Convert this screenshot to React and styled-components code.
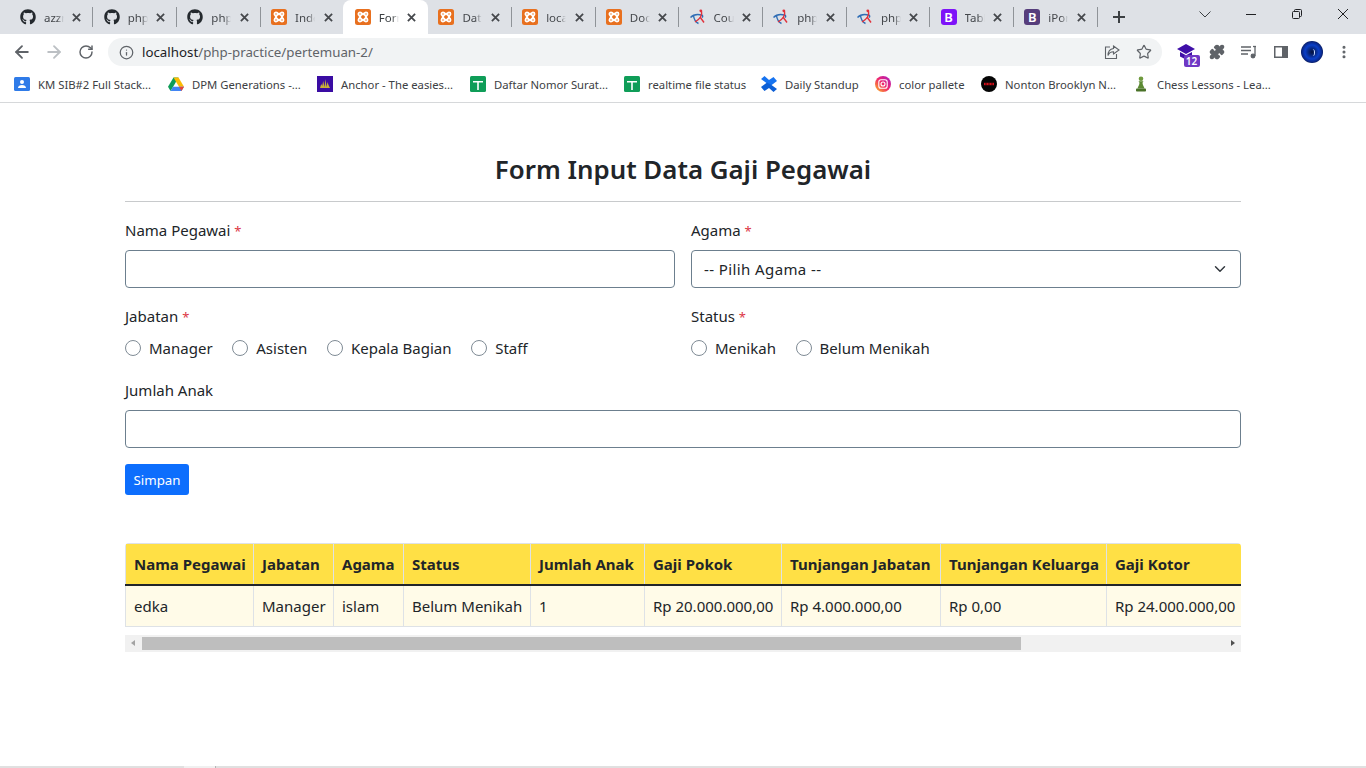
import React from 'react'
import styled, { createGlobalStyle } from 'styled-components'
import { FaGithub } from 'react-icons/fa'
import { ArrowLeft, ArrowRight, RotateCw, Info, Star, Puzzle, EllipsisVertical } from 'lucide-react'

const FONT = `'Noto Sans', 'Open Sans', sans-serif`

const GlobalStyle = createGlobalStyle`
  html, body {
    margin: 0;
    padding: 0;
    background: #fff;
    overflow: hidden;
  }
  * {
    box-sizing: border-box;
  }
`

const XamppIcon = () => (
  <svg width='16' height='16' viewBox='0 0 16 16' fill='none'>
    <rect width='16' height='16' rx='2.5' fill='#e8701f' />
    <g stroke='#fff' strokeWidth='1.7'>
      <circle cx='5' cy='5' r='1.6' />
      <circle cx='11' cy='5' r='1.6' />
      <circle cx='5' cy='11' r='1.6' />
      <circle cx='11' cy='11' r='1.6' />
      <path d='M6.600 5h2.800M6.600 11h2.800M5 6.600v2.800M11 6.600v2.800' strokeWidth='2.400' />
    </g>
  </svg>
)

const CurveIcon = () => (
  <svg width='16' height='16' viewBox='0 0 16 16' fill='none'>
    <path d='M.500 8.500C3 5.800 7 5 11.500 6c1.500.4 1.500 1.500.5 2.500' stroke='#2f6db5' strokeWidth='1.400' />
    <path d='M3.500 6.500c.4 3.500 2 6.500 5 8' stroke='#2f6db5' strokeWidth='1.400' />
    <path d='M11.500 2c.8 3.500-1.500 8-6.500 11' stroke='#e0303a' strokeWidth='1.400' />
    <path d='M10 8l4 5.500' stroke='#e0303a' strokeWidth='1.400' />
    <circle cx='10.800' cy='1.800' r='1.400' fill='#e0303a' />
  </svg>
)

const tabs = [
  { title: 'azzr', kind: 'github' },
  { title: 'php', kind: 'github' },
  { title: 'php', kind: 'github' },
  { title: 'Inde', kind: 'xampp' },
  { title: 'Forr', kind: 'xampp', active: true },
  { title: 'Data', kind: 'xampp' },
  { title: 'loca', kind: 'xampp' },
  { title: 'Doc', kind: 'xampp' },
  { title: 'Cou', kind: 'curve' },
  { title: 'php', kind: 'curve' },
  { title: 'php', kind: 'curve' },
  { title: 'Tabl', kind: 'bootstrap', color: '#7e13f8' },
  { title: 'iPor', kind: 'bootstrap', color: '#563d7c' },
]

const TabIcon = ({ kind, color }) => {
  if (kind === 'github') return <FaGithub size={16} color='#24292e' />
  if (kind === 'xampp') return <XamppIcon />
  if (kind === 'curve') return <CurveIcon />
  return <BootstrapMark $color={color}>B</BootstrapMark>
}

const bookmarks = [
  { title: 'KM SIB#2 Full Stack...', width: 154, icon: 'contact' },
  { title: 'DPM Generations -...', width: 149, icon: 'drive' },
  { title: 'Anchor - The easies...', width: 153, icon: 'anchor' },
  { title: 'Daftar Nomor Surat...', width: 154, icon: 'sheet' },
  { title: 'realtime file status', width: 137, icon: 'sheet' },
  { title: 'Daily Standup', width: 114, icon: 'confluence' },
  { title: 'color pallete', width: 106, icon: 'instagram' },
  { title: 'Nonton Brooklyn N...', width: 152, icon: 'movie' },
  { title: 'Chess Lessons - Lea...', width: 150, icon: 'chess' },
]

const BookmarkIcon = ({ icon }) => {
  switch (icon) {
    case 'contact':
      return (
        <svg width='16' height='16' viewBox='0 0 16 16'>
          <rect y='1' width='16' height='14' rx='1.500' fill='#2f7be8' />
          <circle cx='8' cy='6' r='2' fill='#fff' />
          <path d='M4 12c0-2 1.800-3 4-3s4 1 4 3z' fill='#fff' />
        </svg>
      )
    case 'drive':
      return (
        <svg width='16' height='16' viewBox='0 0 16 16'>
          <path d='M5.500 1.500h5L5 11 2.500 15 0 10.800z' fill='#0f9d58' />
          <path d='M10.500 1.500 16 10.800h-5L5.500 1.500z' fill='#fbbc04' />
          <path d='M16 10.800 13.500 15h-11L5 10.800z' fill='#4285f4' />
          <path d='M16 10.800 13.500 15 11 10.800z' fill='#ea4335' />
        </svg>
      )
    case 'anchor':
      return (
        <svg width='16' height='16' viewBox='0 0 16 16'>
          <rect width='16' height='16' fill='#3a0ca3' />
          <path d='M3 12l1.200-4 1 2 1-5 1.300 6 1-8 1 8 1-5 1 3L13 12z' fill='#c9b037' />
        </svg>
      )
    case 'sheet':
      return (
        <svg width='16' height='16' viewBox='0 0 16 16'>
          <rect width='16' height='16' rx='1.500' fill='#0f9d58' />
          <path d='M3 5h10v1.500H8.800V14H7.200V6.500H3z' fill='#fff' />
        </svg>
      )
    case 'confluence':
      return (
        <svg width='16' height='16' viewBox='0 0 16 16'>
          <path d='M0 3 3.500 0 8 4l4.500-3L16 5l-6 4.500L5.500 7z' fill='#1673f0' />
          <path d='M0 11l6-4.500L10.500 9 16 13l-3.500 3L8 12l-4.500 3z' fill='#0c5fd6' />
        </svg>
      )
    case 'instagram':
      return (
        <svg width='16' height='16' viewBox='0 0 16 16' fill='none'>
          <defs>
            <linearGradient id='ig' x1='0' y1='1' x2='1' y2='0'>
              <stop offset='0' stopColor='#fdc21a' />
              <stop offset='0.5' stopColor='#f0276c' />
              <stop offset='1' stopColor='#a51cc9' />
            </linearGradient>
          </defs>
          <circle cx='8' cy='8' r='8' fill='url(#ig)' />
          <rect x='3.800' y='3.800' width='8.400' height='8.400' rx='2.300' stroke='#fff' strokeWidth='1.100' />
          <circle cx='8' cy='8' r='2' stroke='#fff' strokeWidth='1.100' />
        </svg>
      )
    case 'movie':
      return (
        <svg width='16' height='16' viewBox='0 0 16 16'>
          <circle cx='8' cy='8' r='8' fill='#050505' />
          <path d='M3 6.800h10v2.400H3z' fill='#d8101a' />
          <path d='M5 6.800v2.400M8 6.800v2.400M11 6.800v2.400' stroke='#050505' strokeWidth='.7' />
        </svg>
      )
    default:
      return (
        <svg width='16' height='16' viewBox='0 0 16 16'>
          <circle cx='8' cy='2.800' r='2.300' fill='#6f9a3e' />
          <path d='M5.500 5.300h5L9.500 6.800c0 2 1.500 4 2 5.700h-7C5 10.800 6.500 8.800 6.500 6.800z' fill='#5c8a33' />
          <rect x='3' y='12.500' width='10' height='3' rx='.8' fill='#4a7228' />
        </svg>
      )
  }
}

const columns = [
  { title: 'Nama Pegawai', value: 'edka', width: 128 },
  { title: 'Jabatan', value: 'Manager', width: 80 },
  { title: 'Agama', value: 'islam', width: 70 },
  { title: 'Status', value: 'Belum Menikah', width: 127 },
  { title: 'Jumlah Anak', value: '1', width: 114 },
  { title: 'Gaji Pokok', value: 'Rp 20.000.000,00', width: 137 },
  { title: 'Tunjangan Jabatan', value: 'Rp 4.000.000,00', width: 159 },
  { title: 'Tunjangan Keluarga', value: 'Rp 0,00', width: 166 },
  { title: 'Gaji Kotor', value: 'Rp 24.000.000,00', width: 139 },
]

const App = () => {
  return (
    <Screen>
      <GlobalStyle />
      <TabStrip>
        {tabs.map((tab, i) => (
          <Tab key={i} $active={tab.active} $divider={i !== 3 && i !== 4}>
            <TabIcon kind={tab.kind} color={tab.color} />
            <TabTitle $active={tab.active}>{tab.title}</TabTitle>
            <TabClose viewBox='0 0 10 10'>
              <path d='M1 1l8 8M9 1L1 9' />
            </TabClose>
          </Tab>
        ))}
        <NewTab viewBox='0 0 12 12'>
          <path d='M6 0v12M0 6h12' />
        </NewTab>
        <WindowControls>
          <WindowButton $width={46}>
            <svg width='12' height='7' viewBox='0 0 12 7' fill='none' stroke='#3c4043'>
              <path d='M.5.500 6 6l5.500-5.500' />
            </svg>
          </WindowButton>
          <WindowButton $width={46}>
            <svg width='10' height='1' viewBox='0 0 10 1'>
              <rect width='10' height='1' fill='#202124' />
            </svg>
          </WindowButton>
          <WindowButton $width={46}>
            <svg width='10' height='10' viewBox='0 0 10 10' fill='none' stroke='#202124'>
              <rect x='.5' y='2.500' width='7' height='7' rx='1' />
              <path d='M2.500 2.500v-1a1 1 0 0 1 1-1h5a1 1 0 0 1 1 1v5a1 1 0 0 1-1 1h-1' />
            </svg>
          </WindowButton>
          <WindowButton $width={46}>
            <svg width='10' height='10' viewBox='0 0 10 10' fill='none' stroke='#202124'>
              <path d='M0 0l10 10M10 0L0 10' />
            </svg>
          </WindowButton>
        </WindowControls>
      </TabStrip>

      <Toolbar>
        <NavButton>
          <ArrowLeft size={20} color='#5f6368' strokeWidth={2.2} />
        </NavButton>
        <NavButton>
          <ArrowRight size={20} color='#bcc0c4' strokeWidth={2.2} />
        </NavButton>
        <NavButton>
          <RotateCw size={16} color='#5f6368' strokeWidth={2.2} />
        </NavButton>
        <Omnibox>
          <Info size={15} color='#5f6368' strokeWidth={2} />
          <UrlText>
            <strong>localhost</strong>/php-practice/pertemuan-2/
          </UrlText>
          <OmniActions>
            <svg width='16' height='16' viewBox='0 0 16 16' fill='none' stroke='#5f6368' strokeWidth='1.100'>
              <path d='M6 3H1.500v11.500h11V10' />
              <path d='M9.500 2l5.500 4-5.500 4V7.800C7 7.800 5 9 4 11.500 4 8 6 5 9.500 4.500z' />
            </svg>
            <Star size={16} color='#5f6368' strokeWidth={1.8} />
          </OmniActions>
        </Omnibox>
        <Extensions>
          <ExtensionSlot>
            <svg width='18' height='16' viewBox='0 0 18 16'>
              <path d='M9 0l9 5-9 5-9-5z' fill='#3f0fa8' />
              <path d='M3 8v4.500l6 3 6-3V8l-6 3.300z' fill='#3f0fa8' />
            </svg>
            <ExtensionBadge>12</ExtensionBadge>
          </ExtensionSlot>
          <ExtensionSlot>
            <Puzzle size={16} color='#5f6368' fill='#5f6368' />
          </ExtensionSlot>
          <ExtensionSlot>
            <svg width='16' height='14' viewBox='0 0 16 14' fill='none' stroke='#5f6368' strokeWidth='1.300'>
              <path d='M0 2h10M0 5.500h10M0 9h7' />
              <path d='M14 1.500V11' />
              <path d='M12 1.500h3' />
              <circle cx='12' cy='11' r='1.800' fill='#5f6368' />
            </svg>
          </ExtensionSlot>
          <ExtensionSlot>
            <svg width='14' height='12' viewBox='0 0 14 12'>
              <path d='M0 0h14v12H0zm1.500 1.500v9h6.500v-9z' fill='#5f6368' fillRule='evenodd' />
            </svg>
          </ExtensionSlot>
          <ExtensionSlot>
            <Avatar>
              <AvatarCore />
            </Avatar>
          </ExtensionSlot>
          <ExtensionSlot>
            <EllipsisVertical size={16} color='#5f6368' strokeWidth={2.6} />
          </ExtensionSlot>
        </Extensions>
      </Toolbar>

      <BookmarkBar>
        {bookmarks.map((b) => (
          <Bookmark key={b.title} $width={b.width}>
            <BookmarkIcon icon={b.icon} />
            <span>{b.title}</span>
          </Bookmark>
        ))}
      </BookmarkBar>

      <Main>
        <Title>Form Input Data Gaji Pegawai</Title>
        <Rule />
        <FormGrid>
          <Field>
            <Label>
              Nama Pegawai <Required>*</Required>
            </Label>
            <TextInput type='text' />
          </Field>
          <Field>
            <Label>
              Agama <Required>*</Required>
            </Label>
            <SelectInput defaultValue=''>
              <option value=''>-- Pilih Agama --</option>
            </SelectInput>
          </Field>
          <Field>
            <Label>
              Jabatan <Required>*</Required>
            </Label>
            <RadioRow>
              {['Manager', 'Asisten', 'Kepala Bagian', 'Staff'].map((item) => (
                <RadioLabel key={item}>
                  <Radio type='radio' name='jabatan' />
                  {item}
                </RadioLabel>
              ))}
            </RadioRow>
          </Field>
          <Field>
            <Label>
              Status <Required>*</Required>
            </Label>
            <RadioRow>
              {['Menikah', 'Belum Menikah'].map((item) => (
                <RadioLabel key={item}>
                  <Radio type='radio' name='status' />
                  {item}
                </RadioLabel>
              ))}
            </RadioRow>
          </Field>
        </FormGrid>
        <WideField>
          <Label>Jumlah Anak</Label>
          <TextInput type='text' />
        </WideField>
        <SaveButton type='button'>Simpan</SaveButton>

        <TableViewport>
          <DataTable>
            <colgroup>
              {columns.map((c) => (
                <col key={c.title} style={{ width: c.width }} />
              ))}
            </colgroup>
            <thead>
              <tr>
                {columns.map((c) => (
                  <HeadCell key={c.title}>{c.title}</HeadCell>
                ))}
              </tr>
            </thead>
            <tbody>
              <tr>
                {columns.map((c) => (
                  <BodyCell key={c.title}>{c.value}</BodyCell>
                ))}
              </tr>
            </tbody>
          </DataTable>
        </TableViewport>
        <ScrollTrack>
          <ScrollArrow $dir='left' />
          <ScrollRail>
            <ScrollThumb />
          </ScrollRail>
          <ScrollArrow $dir='right' />
        </ScrollTrack>
      </Main>
      <BottomEdge>
        <BottomGap />
      </BottomEdge>
    </Screen>
  )
}

const Screen = styled.div`
  width: 1366px;
  height: 768px;
  display: flex;
  flex-direction: column;
  overflow: hidden;
  font-family: ${FONT};
  color: #212529;
  background: #fff;
`

const TabStrip = styled.div`
  height: 34px;
  flex: none;
  display: flex;
  align-items: stretch;
  padding-left: 8.7px;
  background: #dee1e6;
`

const Tab = styled.div`
  position: relative;
  width: ${(p) => (p.$active ? '85px' : '83.7px')};
  margin-right: ${(p) => (p.$active ? '-1.3px' : '0')};
  flex: none;
  display: flex;
  align-items: center;
  padding-left: 11.3px;
  background: ${(p) => (p.$active ? '#fff' : 'transparent')};
  border-radius: 8px 8px 0 0;

  &::after {
    content: '';
    display: ${(p) => (p.$divider && !p.$active ? 'block' : 'none')};
    position: absolute;
    right: -1px;
    top: 7px;
    width: 1px;
    height: 20px;
    background: #8f9398;
  }
`

const BootstrapMark = styled.span`
  width: 16px;
  height: 16px;
  flex: none;
  display: flex;
  align-items: center;
  justify-content: center;
  border-radius: 3px;
  background: ${(p) => p.$color};
  color: #fff;
  font-size: 13px;
  font-weight: 600;
  line-height: 1;
`

const TabTitle = styled.span`
  width: 20px;
  margin-left: 8px;
  overflow: hidden;
  white-space: nowrap;
  font-size: 11.5px;
  color: ${(p) => (p.$active ? '#3c4043' : '#45484c')};
  mask-image: linear-gradient(90deg, #000 65%, transparent 100%);
`

const TabClose = styled.svg`
  width: 9px;
  height: 9px;
  margin-left: 8.5px;
  flex: none;
  fill: none;
  stroke: #45484c;
  stroke-width: 2;
`

const NewTab = styled.svg`
  width: 12px;
  height: 12px;
  align-self: center;
  margin-left: 16px;
  flex: none;
  fill: none;
  stroke: #3c4043;
  stroke-width: 2;
`

const WindowControls = styled.div`
  margin-left: auto;
  display: flex;
  align-items: flex-start;
`

const WindowButton = styled.div`
  width: ${(p) => p.$width}px;
  height: 28px;
  display: flex;
  align-items: center;
  justify-content: center;
`

const Toolbar = styled.div`
  height: 36px;
  flex: none;
  display: flex;
  align-items: center;
  padding-left: 6px;
  background: #fff;
`

const NavButton = styled.div`
  width: 32px;
  height: 28px;
  display: flex;
  align-items: center;
  justify-content: center;
`

const Omnibox = styled.div`
  width: 1054px;
  height: 28px;
  margin-left: 6px;
  display: flex;
  align-items: center;
  padding: 0 10px 0 11px;
  border-radius: 14px;
  background: #f1f3f4;
`

const UrlText = styled.div`
  margin-left: 8px;
  font-size: 13.3px;
  color: #5f6368;

  strong {
    font-weight: 400;
    color: #202124;
  }
`

const OmniActions = styled.div`
  margin-left: auto;
  display: flex;
  align-items: center;
  gap: 16px;
`

const Extensions = styled.div`
  display: flex;
  align-items: center;
  margin-left: 8px;
`

const ExtensionSlot = styled.div`
  position: relative;
  width: 31.6px;
  height: 28px;
  display: flex;
  align-items: center;
  justify-content: center;
`

const ExtensionBadge = styled.span`
  position: absolute;
  right: 2px;
  bottom: -1px;
  width: 16px;
  height: 12px;
  border-radius: 2px;
  background: #6f38c5;
  color: #fff;
  font-size: 10px;
  font-weight: 600;
  line-height: 12px;
  text-align: center;
`

const Avatar = styled.div`
  width: 22px;
  height: 22px;
  display: flex;
  align-items: center;
  justify-content: center;
  border-radius: 50%;
  background: radial-gradient(circle, #04103a 0%, #0a3fc8 45%, #0a2a90 62%, #020418 85%);
`

const AvatarCore = styled.div`
  width: 5px;
  height: 7px;
  border-right: 1px solid #cfe0ff;
  border-radius: 50%;
`

const BookmarkBar = styled.div`
  height: 33px;
  flex: none;
  display: flex;
  align-items: center;
  padding: 0 0 4px 14px;
  background: #fff;
  border-bottom: 1px solid #d6d8da;
`

const Bookmark = styled.div`
  width: ${(p) => p.$width}px;
  flex: none;
  display: flex;
  align-items: center;
  gap: 8px;
  font-size: 11.3px;
  color: #3c4043;
  white-space: nowrap;

  svg {
    flex: none;
  }
`

const Main = styled.main`
  flex: 1;
  min-height: 0;
  padding: 49px 125px 0;
  background: #fff;
`

const Title = styled.h2`
  margin: 0;
  font-size: 25.85px;
  font-weight: 600;
  line-height: 34px;
  text-align: center;
  color: #212529;
`

const Rule = styled.hr`
  height: 1px;
  margin: 15px 0 16px;
  border: 0;
  background: #c8cacc;
`

const FormGrid = styled.div`
  display: grid;
  grid-template-columns: 1fr 1fr;
  column-gap: 16px;
  row-gap: 16px;
`

const Field = styled.div`
  display: flex;
  flex-direction: column;
`

const WideField = styled(Field)`
  margin-top: 18px;
`

const Label = styled.label`
  margin-bottom: 8px;
  font-size: 15px;
  line-height: 24px;
`

const Required = styled.span`
  font-size: 13px;
  line-height: 0;
  color: #dc3545;
`

const TextInput = styled.input`
  height: 38px;
  width: 100%;
  border: 1px solid #6c7f8e;
  border-radius: 4px;
  background: #fff;
  font: inherit;
`

const SelectInput = styled.select`
  height: 38px;
  width: 100%;
  padding: 0 36px 0 12px;
  appearance: none;
  border: 1px solid #6c7f8e;
  border-radius: 4px;
  background: #fff
    url("data:image/svg+xml,%3csvg xmlns='http://www.w3.org/2000/svg' viewBox='0 0 16 16'%3e%3cpath fill='none' stroke='%23343a40' stroke-linecap='round' stroke-linejoin='round' stroke-width='2' d='M2 5l6 6 6-6'/%3e%3c/svg%3e")
    no-repeat right 14px center / 12px 12px;
  font-family: ${FONT};
  font-size: 15px;
  letter-spacing: 0.4px;
  color: #212529;
`

const RadioRow = styled.div`
  display: flex;
  gap: 19.7px;
  height: 24px;
`

const RadioLabel = styled.label`
  display: flex;
  align-items: center;
  gap: 8px;
  font-size: 15px;
  line-height: 24px;
`

const Radio = styled.input`
  width: 16px;
  height: 16px;
  margin: 0;
  appearance: none;
  border: 1px solid #7f8b95;
  border-radius: 50%;
  background: #fff;
`

const SaveButton = styled.button`
  display: block;
  width: 64px;
  height: 31px;
  margin-top: 16px;
  padding: 0;
  border: 0;
  border-radius: 3px;
  background: #0d6efd;
  color: #fff;
  font-family: ${FONT};
  font-size: 13.3px;
`

const TableViewport = styled.div`
  margin-top: 48px;
  overflow: hidden;
  border-radius: 4px 4px 0 0;
`

const DataTable = styled.table`
  width: 1120px;
  table-layout: fixed;
  border-collapse: collapse;
  font-size: 15px;
`

const HeadCell = styled.th`
  height: 41px;
  padding: 0 8px;
  border: 1px solid #dee2e6;
  border-bottom: 2px solid #212529;
  background: #ffe045;
  font-weight: 700;
  text-align: left;
  white-space: nowrap;
  color: #212529;
`

const BodyCell = styled.td`
  height: 42px;
  padding: 0 8px;
  border: 1px solid #dee2e6;
  background: #fffbe8;
  white-space: nowrap;
  color: #212529;
`

const ScrollTrack = styled.div`
  height: 17px;
  margin-top: 8px;
  display: flex;
  align-items: stretch;
  background: #f1f1f1;
`

const ScrollArrow = styled.div`
  width: 17px;
  flex: none;
  position: relative;

  &::after {
    content: '';
    position: absolute;
    top: 5px;
    left: ${(p) => (p.$dir === 'left' ? '6px' : '7px')};
    border-style: solid;
    border-width: 3.5px 4px;
    border-color: transparent;
    ${(p) =>
      p.$dir === 'left'
        ? 'border-right-color: #a3a3a3; border-left-width: 0;'
        : 'border-left-color: #505050; border-right-width: 0;'}
  }
`

const ScrollRail = styled.div`
  flex: 1;
  display: flex;
  align-items: center;
`

const ScrollThumb = styled.div`
  width: 879px;
  height: 13px;
  background: #bebebe;
`

const BottomEdge = styled.div`
  height: 2px;
  flex: none;
  padding-left: 184px;
  background: #e0e0e0;
`

const BottomGap = styled.div`
  width: 32px;
  height: 100%;
  background: #f0f0f0;
  border-right: 1px solid #b5b5b5;
`

export default App
